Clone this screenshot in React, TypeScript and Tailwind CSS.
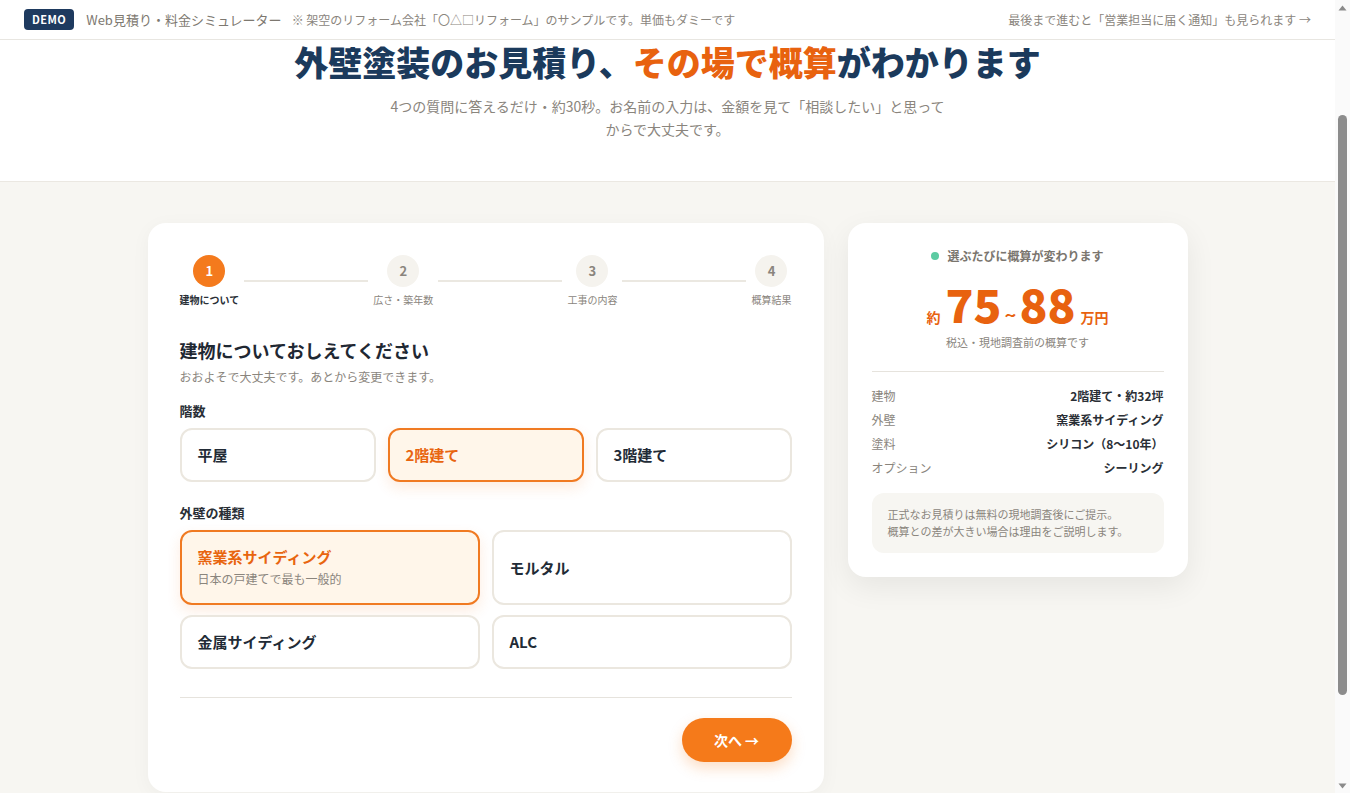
import React, { useLayoutEffect, useRef } from "react";

function Step({ n, label, active }: { n: number; label: string; active?: boolean }) {
  return (
    <div className="flex flex-col items-center gap-[6px]">
      <div
        className={
          active
            ? "w-8 h-8 rounded-full bg-[#f47a1d] text-white flex items-center justify-center text-[13px] font-bold"
            : "w-8 h-8 rounded-full bg-[#f5f3ee] text-[#8a857d] flex items-center justify-center text-[13px] font-bold"
        }
      >
        {n}
      </div>
      <div
        className={
          active
            ? "text-[10px] leading-[14px] font-bold text-[#2a2f36] whitespace-nowrap"
            : "text-[10px] leading-[14px] text-[#8a857d] whitespace-nowrap"
        }
      >
        {label}
      </div>
    </div>
  );
}

function Opt({ label, sub, selected, tall }: { label: string; sub?: string; selected?: boolean; tall?: boolean }) {
  return (
    <div
      className={
        (selected
          ? "border-2 border-[#f07a22] bg-[#fff6ea] shadow-[0_6px_14px_rgba(240,122,34,0.14)] "
          : "border-2 border-[#ebe7df] bg-white ") +
        (tall ? "h-[75px] " : "h-[54px] ") +
        "rounded-[12px] px-4 flex flex-col justify-center"
      }
    >
      <div className={(selected ? "text-[#e8650f]" : "text-[#222b36]") + " text-[15px] leading-[20px] font-bold"}>{label}</div>
      {sub && <div className="text-[12px] leading-[18px] text-[#8a857d] mt-[3px]">{sub}</div>}
    </div>
  );
}

function Row({ k, v }: { k: string; v: string }) {
  return (
    <div className="flex justify-between items-center h-6">
      <span className="text-[12px] text-[#8a857d]">{k}</span>
      <span className="text-[12px] font-bold text-[#2a2f36]">{v}</span>
    </div>
  );
}

function FakeScrollbar() {
  return (
    <div className="w-[15px] h-full bg-[#fafafa] flex flex-col items-center shrink-0">
      <div className="h-[15px] flex items-center justify-center">
        <svg width="9" height="6" viewBox="0 0 9 6">
          <path d="M4.5 0.5 L8.5 5.5 L0.5 5.5 Z" fill="#8a8a8a" />
        </svg>
      </div>
      <div className="mt-[100px] w-[9px] h-[580px] rounded-full bg-[#8c8c8c]" />
      <div className="flex-1" />
      <div className="h-[15px] flex items-center justify-center">
        <svg width="9" height="6" viewBox="0 0 9 6">
          <path d="M0.5 0.5 L8.5 0.5 L4.5 5.5 Z" fill="#8a8a8a" />
        </svg>
      </div>
    </div>
  );
}

export default function App() {
  const ref = useRef<HTMLDivElement>(null);
  useLayoutEffect(() => {
    if (ref.current) ref.current.scrollTop = 137;
  }, []);
  return (
    <div className="h-[793px] flex overflow-hidden font-['Noto_Sans_CJK_JP','Noto_Sans',sans-serif] bg-[#f7f6f2]">
      <div ref={ref} className="flex-1 h-full overflow-y-auto [scrollbar-width:none] [&::-webkit-scrollbar]:hidden">
        <header className="sticky top-0 z-10 h-10 bg-white border-b border-[#e8e6e1] flex items-center px-6">
          <span className="bg-[#1e3a5f] text-white text-[11px] font-bold tracking-[0.04em] rounded-[4px] h-[21px] px-[8px] flex items-center">
            DEMO
          </span>
          <span className="ml-3 text-[13px] text-[#7d7870]">Web見積り・料金シミュレーター</span>
          <span className="ml-[10px] text-[12px] text-[#8a857d]">
            ※ 架空のリフォーム会社「〇△□リフォーム」のサンプルです。単価もダミーです
          </span>
          <span className="ml-auto text-[12px] text-[#8a857d]">最後まで進むと「営業担当に届く通知」も見られます →</span>
        </header>

        <section className="bg-white border-b border-[#ebe8e2] pt-[135px] pb-[40px] flex flex-col items-center">
          <h1 className="text-[34px] leading-[48px] font-black text-[#1b3a5c] text-center">
            外壁塗装のお見積り、<span className="text-[#e8620f]">その場で概算</span>がわかります
          </h1>
          <p className="mt-[9px] max-w-[565px] text-center text-[14px] leading-[23px] text-[#8a857d]">
            4つの質問に答えるだけ・約30秒。お名前の入力は、金額を見て「相談したい」と思ってからで大丈夫です。
          </p>
        </section>

        <main className="pt-[41px] pb-[113px]">
          <div className="max-w-[1040px] mx-auto flex gap-6 items-start">
            <div className="flex-1 bg-white rounded-[18px] shadow-[0_4px_20px_rgba(0,0,0,0.04)] px-8 pt-8 pb-[30px]">
              <div className="flex items-center gap-[5px]">
                <Step n={1} label="建物について" active />
                <div className="flex-1 h-[2px] bg-[#ebe8e1]" />
                <Step n={2} label="広さ・築年数" />
                <div className="flex-1 h-[2px] bg-[#ebe8e1]" />
                <Step n={3} label="工事の内容" />
                <div className="flex-1 h-[2px] bg-[#ebe8e1]" />
                <Step n={4} label="概算結果" />
              </div>

              <h2 className="mt-[31px] text-[18px] leading-[25px] font-bold text-[#1f2833]">建物についておしえてください</h2>
              <p className="mt-1 text-[12px] leading-[19px] text-[#8a857d]">おおよそで大丈夫です。あとから変更できます。</p>

              <div className="mt-[15px] text-[13px] leading-[19px] font-bold text-[#2a2f36] mb-[8px]">階数</div>
              <div className="grid grid-cols-3 gap-3">
                <Opt label="平屋" />
                <Opt label="2階建て" selected />
                <Opt label="3階建て" />
              </div>

              <div className="mt-[21px] text-[13px] leading-[19px] font-bold text-[#2a2f36] mb-2">外壁の種類</div>
              <div className="grid grid-cols-2 gap-x-3 gap-y-2.5">
                <Opt label="窯業系サイディング" sub="日本の戸建てで最も一般的" selected tall />
                <Opt label="モルタル" tall />
                <Opt label="金属サイディング" />
                <Opt label="ALC" />
              </div>

              <div className="mt-7 border-t border-[#e6e3dd]" />
              <div className="pt-5 flex justify-end">
                <button className="w-[110px] h-[44px] rounded-full bg-[#f57a1a] text-white text-[14px] font-bold shadow-[0_6px_14px_rgba(245,122,26,0.25)]">
                  次へ →
                </button>
              </div>
            </div>

            <div className="w-[340px] bg-white rounded-[18px] shadow-[0_10px_30px_rgba(0,0,0,0.07)] p-6">
              <div className="flex items-center justify-center gap-2 h-[18px]">
                <span className="w-2 h-2 rounded-full bg-[#5ccba2]" />
                <span className="text-[12px] font-bold text-[#7a756e]">選ぶたびに概算が変わります</span>
              </div>
              <div className="mt-[14px] flex items-baseline justify-center text-[#e8620f] font-bold">
                <span className="text-[14px] mr-[5px]">約</span>
                <span className="text-[46px] leading-[48px] font-extrabold">75</span>
                <span className="text-[20px] mx-[3px]">~</span>
                <span className="text-[46px] leading-[48px] font-extrabold">88</span>
                <span className="text-[14px] ml-[5px]">万円</span>
              </div>
              <div className="mt-[4px] text-center text-[11px] text-[#8a857d]">税込・現地調査前の概算です</div>
              <div className="mt-[20px] border-t border-[#e6e3dd]" />
              <div className="mt-[12px]">
                <Row k="建物" v="2階建て・約32坪" />
                <Row k="外壁" v="窯業系サイディング" />
                <Row k="塗料" v="シリコン（8〜10年）" />
                <Row k="オプション" v="シーリング" />
              </div>
              <div className="mt-[13px] bg-[#f7f6f2] rounded-[12px] px-4 py-[13px] text-[11px] leading-[17px] text-[#8a857d]">
                正式なお見積りは無料の現地調査後にご提示。
                <br />
                概算との差が大きい場合は理由をご説明します。
              </div>
            </div>
          </div>
        </main>
      </div>
      <FakeScrollbar />
    </div>
  );
}
